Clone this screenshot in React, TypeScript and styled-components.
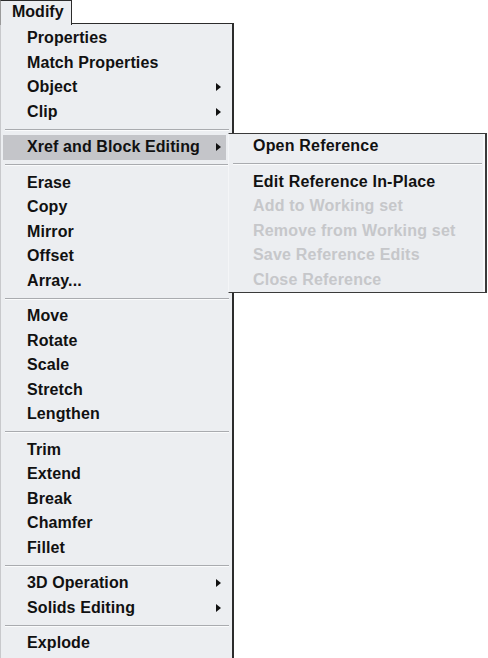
import React from "react";
import styled, { createGlobalStyle } from "styled-components";

const GlobalStyle = createGlobalStyle`
  html, body {
    margin: 0;
    padding: 0;
    background: #ffffff;
  }
  body {
    font-family: "Liberation Sans", Arial, sans-serif;
  }
`;

const Screen = styled.div`
  position: relative;
  width: 488px;
  height: 658px;
  overflow: hidden;
  background: #ffffff;
`;

const Tab = styled.div`
  position: relative;
  z-index: 2;
  box-sizing: border-box;
  width: 72px;
  height: 25px;
  margin-bottom: -2px;
  padding-left: 11px;
  border-top: 1.5px solid #2c2c2c;
  border-left: 1px solid #9a9a9a;
  border-right: 1.5px solid #2c2c2c;
  background: #eceef1;
  font-size: 16px;
  font-weight: 700;
  line-height: 21px;
  color: #111;
`;

const Menu = styled.div`
  position: relative;
  box-sizing: border-box;
  width: 234px;
  padding: 2px 0 2px;
  background: #eceef1;
  border-top: 1.5px solid #2c2c2c;
  border-right: 2px solid #2c2c2c;
  border-left: 1px solid #c8c9cc;
  border-bottom: 1px solid #a6a8ac;
`;

const Row = styled.div<{ $active?: boolean; $disabled?: boolean }>`
  position: relative;
  display: flex;
  align-items: center;
  justify-content: space-between;
  height: 24.5px;
  margin: 0 6px 0 2px;
  padding: 0 5px 0 24px;
  background: ${(p) => (p.$active ? "#c4c5c9" : "transparent")};
  font-size: 16px;
  font-weight: 700;
  letter-spacing: 0.1px;
  color: ${(p) => (p.$disabled ? "#c6c7ca" : "#111111")};
  white-space: nowrap;
`;

const Separator = styled.div`
  height: 11px;
  display: flex;
  align-items: center;
  margin: 0 3px 0 4px;

  &::after {
    content: "";
    flex: 1;
    height: 0;
    border-top: 1px solid #a9abaf;
    border-bottom: 1px solid #fafbfc;
  }
`;

const Submenu = styled.div`
  position: absolute;
  z-index: 3;
  left: 225px;
  top: -2px;
  box-sizing: border-box;
  width: 259px;
  background: #eceef1;
  border-top: 1.5px solid #3a3a3a;
  border-right: 2px solid #3a3a3a;
  border-bottom: 1.5px solid #3a3a3a;
  border-left: 1px solid #f4f5f7;
  box-shadow: inset -2px 0 0 #f7f8fa;

  ${Row} {
    margin: 0 4px 0 0;
    padding-left: 24px;
    letter-spacing: 0.2px;
  }
`;

const Arrow = () => (
  <svg width="5" height="8" viewBox="0 0 5 8" style={{ flex: "none" }}>
    <path d="M0 0 L5 4 L0 8 Z" fill="#111" />
  </svg>
);

type Item = { label: string; sub?: boolean; active?: boolean };

const groups: Item[][] = [
  [
    { label: "Properties" },
    { label: "Match Properties" },
    { label: "Object", sub: true },
    { label: "Clip", sub: true },
  ],
  [{ label: "Xref and Block Editing", sub: true, active: true }],
  [
    { label: "Erase" },
    { label: "Copy" },
    { label: "Mirror" },
    { label: "Offset" },
    { label: "Array..." },
  ],
  [
    { label: "Move" },
    { label: "Rotate" },
    { label: "Scale" },
    { label: "Stretch" },
    { label: "Lengthen" },
  ],
  [
    { label: "Trim" },
    { label: "Extend" },
    { label: "Break" },
    { label: "Chamfer" },
    { label: "Fillet" },
  ],
  [
    { label: "3D Operation", sub: true },
    { label: "Solids Editing", sub: true },
  ],
  [{ label: "Explode" }],
];

const xrefItems = [
  [{ label: "Open Reference", disabled: false }],
  [
    { label: "Edit Reference In-Place", disabled: false },
    { label: "Add to Working set", disabled: true },
    { label: "Remove from Working set", disabled: true },
    { label: "Save Reference Edits", disabled: true },
    { label: "Close Reference", disabled: true },
  ],
];

const XrefSubmenu = () => (
  <Submenu>
    {xrefItems.map((group, gi) => (
      <React.Fragment key={gi}>
        {gi > 0 && <Separator />}
        {group.map((it) => (
          <Row key={it.label} $disabled={it.disabled}>
            {it.label}
          </Row>
        ))}
      </React.Fragment>
    ))}
  </Submenu>
);

export default function App() {
  return (
    <>
      <GlobalStyle />
      <Screen>
        <Tab>Modify</Tab>
        <Menu>
          {groups.map((group, gi) => (
            <React.Fragment key={gi}>
              {gi > 0 && <Separator />}
              {group.map((it) => (
                <Row key={it.label} $active={it.active}>
                  <span>{it.label}</span>
                  {it.sub && <Arrow />}
                  {it.active && <XrefSubmenu />}
                </Row>
              ))}
            </React.Fragment>
          ))}
        </Menu>
      </Screen>
    </>
  );
}
